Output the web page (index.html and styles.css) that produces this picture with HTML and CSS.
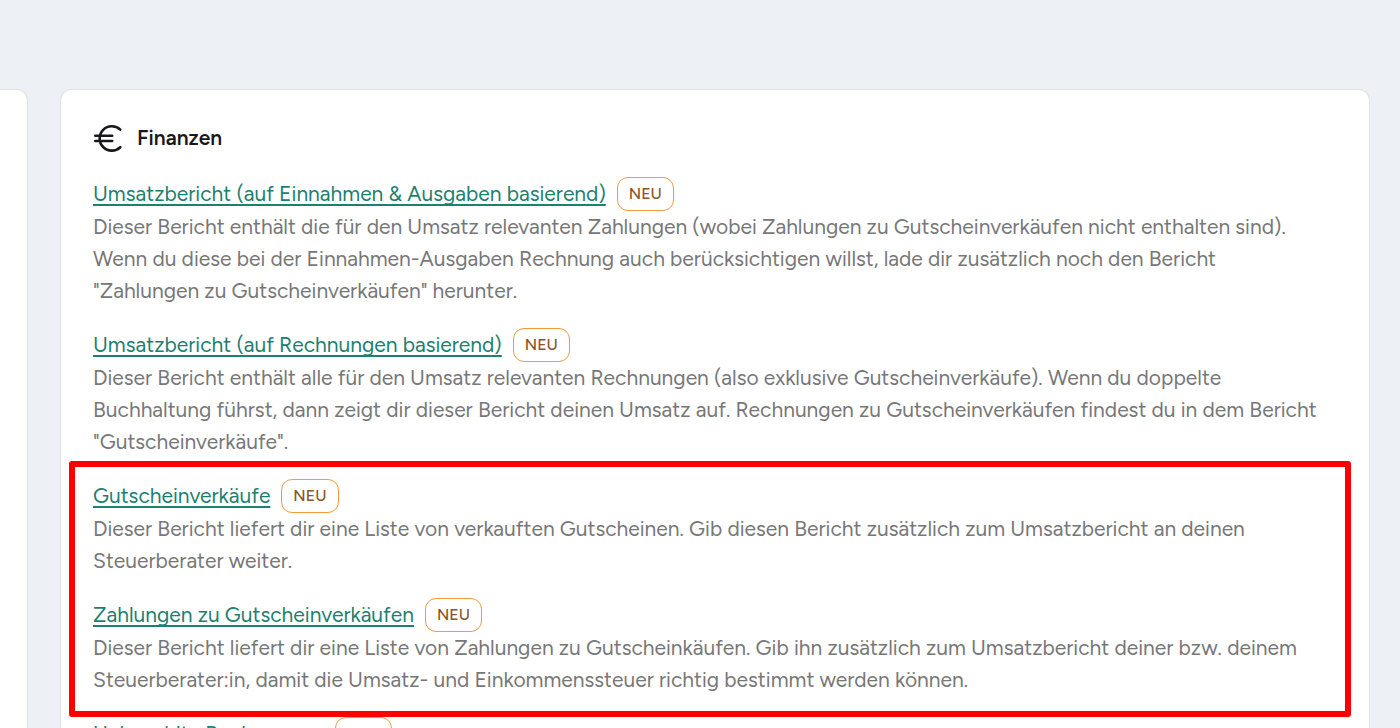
FILE: index.html
```html
<!DOCTYPE html>
<html lang="de">
<head>
<meta charset="utf-8">
<title>Berichte – Finanzen</title>
<link rel="stylesheet" href="styles.css">
</head>
<body>
<main class="board">
  <section class="card card-previous" aria-hidden="true"></section>
  <section class="card card-finance">
    <header class="card-header">
      <svg class="euro" viewBox="0 0 30 30" aria-hidden="true"><path d="M27.3 6.6A12.2 12.2 0 1 0 27.3 24.2M2.3 12.8H19.2M2.3 18H19.2"/></svg>
      <h2 class="card-title">Finanzen</h2>
    </header>
    <div class="reports">
      <article class="report">
        <h3 class="report-head"><a class="report-link" href="#">Umsatzbericht (auf Einnahmen &amp; Ausgaben basierend)</a><span class="badge">NEU</span></h3>
        <p class="report-text">Dieser Bericht enthält die für den Umsatz relevanten Zahlungen (wobei Zahlungen zu Gutscheinverkäufen nicht enthalten sind).<br>Wenn du diese bei der Einnahmen-Ausgaben Rechnung auch berücksichtigen willst, lade dir zusätzlich noch den Bericht<br>"Zahlungen zu Gutscheinverkäufen" herunter.</p>
      </article>
      <article class="report">
        <h3 class="report-head"><a class="report-link" href="#">Umsatzbericht (auf Rechnungen basierend)</a><span class="badge">NEU</span></h3>
        <p class="report-text">Dieser Bericht enthält alle für den Umsatz relevanten Rechnungen (also exklusive Gutscheinverkäufe). Wenn du doppelte Buchhaltung führst, dann zeigt dir dieser Bericht deinen Umsatz auf. Rechnungen zu Gutscheinverkäufen findest du in dem Bericht "Gutscheinverkäufe".</p>
      </article>
      <div class="reports highlighted">
        <article class="report">
          <h3 class="report-head"><a class="report-link" href="#">Gutscheinverkäufe</a><span class="badge">NEU</span></h3>
          <p class="report-text">Dieser Bericht liefert dir eine Liste von verkauften Gutscheinen. Gib diesen Bericht zusätzlich zum Umsatzbericht an deinen Steuerberater weiter.</p>
        </article>
        <article class="report">
          <h3 class="report-head"><a class="report-link" href="#">Zahlungen zu Gutscheinverkäufen</a><span class="badge">NEU</span></h3>
          <p class="report-text">Dieser Bericht liefert dir eine Liste von Zahlungen zu Gutscheinkäufen. Gib ihn zusätzlich zum Umsatzbericht deiner bzw. deinem Steuerberater:in, damit die Umsatz- und Einkommenssteuer richtig bestimmt werden können.</p>
        </article>
      </div>
      <article class="report">
        <h3 class="report-head"><a class="report-link" href="#">Unbezahlte Rechnungen</a><span class="badge">NEU</span></h3>
      </article>
    </div>
  </section>
</main>
</body>
</html>
```
FILE: styles.css
```css
* { box-sizing: border-box; }

body {
  margin: 0;
  height: 100vh;
  overflow: hidden;
  background: #edf0f5;
  color: #18181b;
  font-family: Figtree, Lato, "Liberation Sans", sans-serif;
  font-size: 21px;
}

.board {
  display: grid;
  grid-template-columns: 28px minmax(0, 1fr);
  gap: 32px;
  min-height: 100vh;
  padding: 89px 30px 0 0;
}

.card {
  background: #fff;
  border: 1px solid #dfe0e3;
  border-bottom: 0;
  border-radius: 11px 11px 0 0;
}

.card-previous {
  border-left: 0;
  border-top-left-radius: 0;
}

.card-finance { padding: 32px; }

.card-header {
  display: flex;
  align-items: center;
  gap: 14px;
  height: 32px;
  margin-bottom: 23px;
}

.euro {
  width: 30px;
  height: 30px;
  fill: none;
  stroke: #18181b;
  stroke-width: 2.6;
  stroke-linecap: round;
}

.card-title {
  margin: 0;
  font-size: 21px;
  font-weight: 600;
  line-height: 32px;
}

.reports {
  display: flex;
  flex-direction: column;
  gap: 21px;
}

.report-head {
  display: flex;
  align-items: center;
  gap: 11px;
  margin: 0;
  height: 34px;
  font-size: 21px;
  font-weight: 400;
  line-height: 32px;
}

.report-link {
  color: #1d7f70;
  text-decoration-line: underline;
  text-decoration-thickness: 2px;
  text-underline-offset: 3px;
  text-decoration-skip-ink: none;
}

.badge {
  padding: 0 11px;
  border: 1px solid #f6993f;
  border-radius: 11px;
  color: #8d5524;
  font-size: 16px;
  font-weight: 500;
}

.report-text {
  margin: 0;
  color: #777;
  line-height: 32px;
}

.highlighted { position: relative; }

.highlighted::after {
  content: "";
  position: absolute;
  inset: -18px -14px -21px -24px;
  border: 6px solid #f00;
  border-radius: 3px;
  pointer-events: none;
}
```
